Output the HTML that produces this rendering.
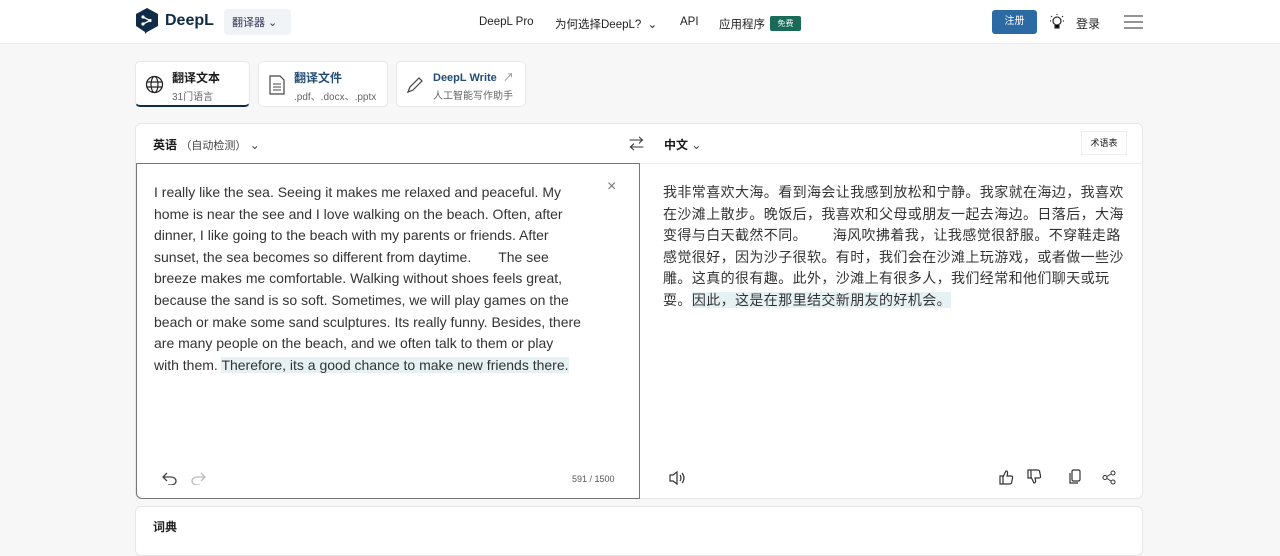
<!DOCTYPE html>
<html><head><meta charset="utf-8"><style>
*{box-sizing:border-box;margin:0;padding:0}
body{width:1280px;height:547px;overflow:hidden;background:#f7f7f7;font-family:"Liberation Sans","Noto Sans CJK SC",sans-serif;color:#1a1a1a;position:relative}
.hdr{position:absolute;left:0;top:0;width:1280px;height:44px;background:#fff;border-bottom:1px solid #eee}
.abs{position:absolute}
.tab{position:absolute;top:61px;height:46px;background:#fff;border:1px solid #e8e8e8;border-radius:5px}
.t1{font-size:12px;font-weight:bold;color:#1a1a1a}
.t2{font-size:10px;color:#666;margin-top:2px}
.card{position:absolute;left:135px;top:123px;width:1008px;height:376px;background:#fff;border:1px solid #e6e6e6;border-radius:6px}
.txt{font-size:14px;line-height:21.6px;color:#333;white-space:nowrap}
.zh{font-size:14px;letter-spacing:0.4px;line-height:21.6px;color:#333;white-space:nowrap}
.hl{background:#e6f1f4}
svg{position:absolute}
</style></head><body>
<div class="hdr">
 <svg style="left:135px;top:7px" width="24" height="28" viewBox="0 0 24 28"><path d="M12 1 L23 7 V19 L12 25 L10 27 V25 L1 19 V7 Z" fill="#0f2b46"/><circle cx="8" cy="10" r="1.6" fill="#fff"/><circle cx="8" cy="17" r="1.6" fill="#fff"/><circle cx="15" cy="13.5" r="1.6" fill="#fff"/><path d="M8 10 L15 13.5 L8 17" stroke="#fff" stroke-width="1.3" fill="none"/></svg>
 <div class="abs" style="left:165px;top:12px;font-size:16px;font-weight:bold;color:#0f2b46">DeepL</div>
 <div class="abs" style="left:224px;top:9px;width:67px;height:26px;background:#f0f4f7;border-radius:4px;font-size:11px;color:#335;padding:5px 0 0 8px">翻译器 ⌄</div>
 <div class="abs" style="left:479px;top:16px;font-size:11.5px;color:#222">DeepL Pro</div>
 <div class="abs" style="left:555px;top:16px;font-size:11.5px;color:#222">为何选择DeepL? &nbsp;⌄</div>
 <div class="abs" style="left:680px;top:16px;font-size:11.5px;color:#222">API</div>
 <div class="abs" style="left:719px;top:16px;font-size:11.5px;color:#222">应用程序</div>
 <div class="abs" style="left:770px;top:16px;width:31px;height:15px;background:#1a6a5a;color:#fff;font-size:8px;text-align:center;line-height:15px;border-radius:2px">免费</div>
 <div class="abs" style="left:992px;top:10px;width:45px;height:24px;background:#2b6aa3;border-radius:3px;color:#fff;font-size:10px;text-align:center;line-height:24px">注册</div>
 <svg style="left:1049px;top:13px" width="16" height="18" viewBox="0 0 16 18"><circle cx="8" cy="8" r="4" stroke="#333" fill="none" stroke-width="1.3"/><path d="M6 12v3h4v-3M8 1v1M2 3l1 1M14 3l-1 1M1 8h1M14 8h1" stroke="#333" stroke-width="1.2"/></svg>
 <div class="abs" style="left:1076px;top:15px;font-size:12px;color:#222">登录</div>
 <svg style="left:1124px;top:15px" width="19" height="14"><path d="M0 1h19M0 7h19M0 13h19" stroke="#555" stroke-width="1.3"/></svg>
</div>

<div class="tab" style="left:135px;width:115px;border-bottom:2px solid #0f2b46">
 <svg style="left:9px;top:13px" width="19" height="19" viewBox="0 0 19 19"><circle cx="9.5" cy="9.5" r="8" stroke="#222" fill="none" stroke-width="1.3"/><ellipse cx="9.5" cy="9.5" rx="3.5" ry="8" stroke="#222" fill="none" stroke-width="1.2"/><path d="M1.5 7h16M1.5 12h16" stroke="#222" stroke-width="1.2"/></svg>
 <div class="abs" style="left:36px;top:7px"><div class="t1">翻译文本</div><div class="t2">31门语言</div></div>
</div>
<div class="tab" style="left:258px;width:130px">
 <svg style="left:10px;top:13px" width="16" height="20"><path d="M1 1h10l4 4v14H1z" stroke="#444" fill="none" stroke-width="1.2"/><path d="M4 9h8M4 12h8M4 15h8" stroke="#444"/></svg>
 <div class="abs" style="left:35px;top:7px"><div class="t1" style="color:#234d75">翻译文件</div><div class="t2">.pdf、.docx、.pptx</div></div>
</div>
<div class="tab" style="left:396px;width:130px">
 <svg style="left:9px;top:14px" width="18" height="18"><path d="M2 16l2-5 9-9 3 3-9 9z" stroke="#444" fill="none" stroke-width="1.2"/></svg>
 <div class="abs" style="left:36px;top:7px"><div class="t1" style="color:#234d75;font-size:11px">DeepL Write &nbsp;<span style="color:#888;font-weight:normal">↗</span></div><div class="t2">人工智能写作助手</div></div>
</div>

<div class="card">
 <div class="abs" style="left:17px;top:12px;font-size:12px;font-weight:bold">英语 <span style="font-weight:normal;font-size:11px;color:#444">（自动检测）</span> <span style="font-weight:normal;color:#444">⌄</span></div>
 <div class="abs" style="left:493px;top:9px;font-size:15px;color:#333">⇄</div>
 <div class="abs" style="left:528px;top:12px;font-size:12px;font-weight:bold">中文 <span style="font-weight:normal;color:#444">⌄</span></div>
 <div class="abs" style="left:945px;top:7px;width:46px;height:24px;background:#fff;border:1px solid #eee;font-size:9px;text-align:center;line-height:22px">术语表</div>
 <div class="abs" style="left:0;top:39px;width:1006px;border-top:1px solid #eee"></div>
 <div class="abs" style="left:0;top:39px;width:504px;height:336px;border:1px solid #777;border-radius:0 0 0 6px"></div>
 <div class="abs" style="left:471px;top:54px;font-size:16px;color:#777">×</div>
 <div class="abs txt" style="left:18px;top:58px">I really like the sea. Seeing it makes me relaxed and peaceful. My<br>home is near the see and I love walking on the beach. Often, after<br>dinner, I like going to the beach with my parents or friends. After<br>sunset, the sea becomes so different from daytime. &nbsp; &nbsp; &nbsp; The see<br>breeze makes me comfortable. Walking without shoes feels great,<br>because the sand is so soft. Sometimes, we will play games on the<br>beach or make some sand sculptures. Its really funny. Besides, there<br>are many people on the beach, and we often talk to them or play<br>with them. <span class="hl">Therefore, its a good chance to make new friends there.</span></div>
 <div class="abs zh" style="left:527px;top:58px">我非常喜欢大海。看到海会让我感到放松和宁静。我家就在海边，我喜欢<br>在沙滩上散步。晚饭后，我喜欢和父母或朋友一起去海边。日落后，大海<br>变得与白天截然不同。&nbsp; &nbsp; &nbsp; 海风吹拂着我，让我感觉很舒服。不穿鞋走路<br>感觉很好，因为沙子很软。有时，我们会在沙滩上玩游戏，或者做一些沙<br>雕。这真的很有趣。此外，沙滩上有很多人，我们经常和他们聊天或玩<br>耍。<span class="hl">因此，这是在那里结交新朋友的好机会。</span></div>
 <svg style="left:26px;top:347px" width="16" height="14"><path d="M5 2L1 6l4 4M1 6h8a5 4 0 0 1 0 8H6" stroke="#444" fill="none" stroke-width="1.3"/></svg>
 <svg style="left:54px;top:347px" width="16" height="14"><path d="M11 2l4 4-4 4M15 6H7a5 4 0 0 0 0 8h3" stroke="#bbb" fill="none" stroke-width="1.3"/></svg>
 <div class="abs" style="left:436px;top:350px;font-size:9px;color:#555">591 / 1500</div>
 <svg style="left:532px;top:346px" width="18" height="16"><path d="M2 5h3l4-3v12l-4-3H2z" stroke="#333" fill="none" stroke-width="1.2"/><path d="M12 5q2 3 0 6M14 3q4 5 0 10" stroke="#333" fill="none" stroke-width="1.2"/></svg>
 <svg style="left:862px;top:345px" width="16" height="16"><path d="M2 7h3v8H2zM5 8l3-6q2 0 1.5 3L9 7h4q2 0 1.5 2l-1 5q-.5 1-2 1H5" stroke="#333" fill="none" stroke-width="1.2"/></svg>
 <svg style="left:890px;top:345px" width="16" height="16"><path d="M2 1h3v8H2zM5 8l3 6q2 0 1.5-3L9 9h4q2 0 1.5-2l-1-5q-.5-1-2-1H5" stroke="#333" fill="none" stroke-width="1.2"/></svg>
 <svg style="left:932px;top:345px" width="14" height="16"><rect x="4" y="1" width="8" height="11" rx="1.5" stroke="#333" fill="none" stroke-width="1.2"/><path d="M2 4v10h8" stroke="#333" fill="none" stroke-width="1.2"/></svg>
 <svg style="left:966px;top:346px" width="15" height="15"><circle cx="11" cy="3" r="2" stroke="#333" fill="none"/><circle cx="3" cy="7.5" r="2" stroke="#333" fill="none"/><circle cx="11" cy="12" r="2" stroke="#333" fill="none"/><path d="M5 6.5l4-2.5M5 8.5l4 2.5" stroke="#333"/></svg>
</div>
<div class="abs" style="left:135px;top:506px;width:1008px;height:50px;background:#fff;border:1px solid #e6e6e6;border-radius:6px"></div>
<div class="abs" style="left:153px;top:518px;font-size:12px;font-weight:bold;color:#222">词典</div>
</body></html>
